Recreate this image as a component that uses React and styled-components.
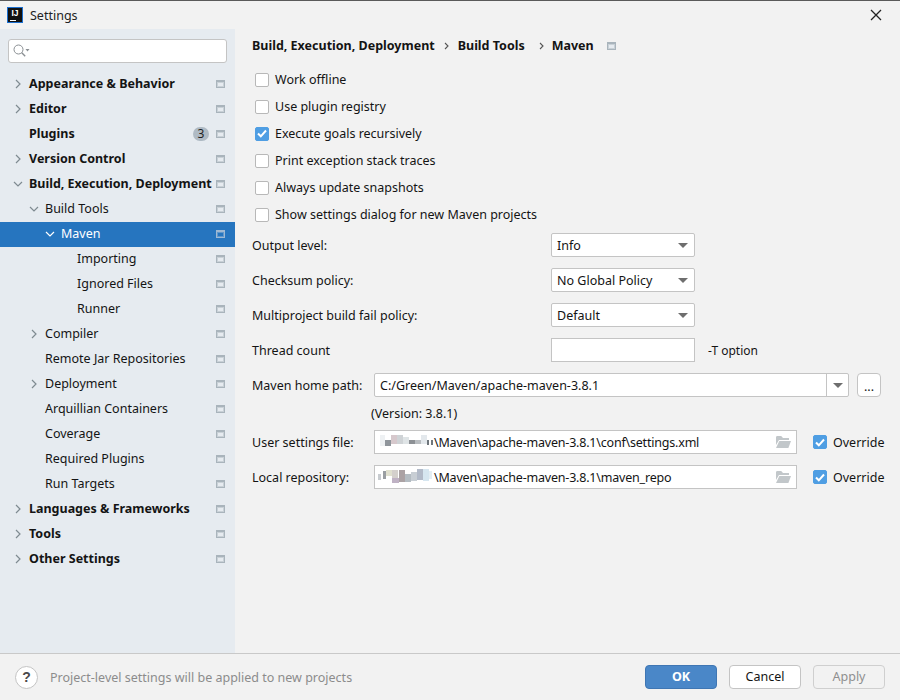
import React from "react";
import styled, { createGlobalStyle } from "styled-components";

const Global = createGlobalStyle`
  html, body { margin: 0; padding: 0; background: #f2f2f2; }
  * { box-sizing: border-box; }
`;

const FONT = `"Noto Sans", "Open Sans", sans-serif`;

const Dialog = styled.div`
  width: 900px; height: 700px; display: flex; flex-direction: column; overflow: hidden;
  font: 12.5px/18px ${FONT}; color: #141414; background: #f2f2f2; border-top: 1px solid #5a5a5a;
`;
const TitleBar = styled.div`
  height: 28px; flex: none; display: flex; align-items: center; padding: 0 18px 0 7px; background: #f2f2f2;
`;
const TitleText = styled.span`margin-left: 7px; padding-top: 2px; font-size: 12.5px; color: #222; flex: 1;`;
const AppIcon = styled.div`
  width: 16px; height: 16px; background: #111; border: 1px solid #1c6fd0; color: #fff; position: relative;
  font: bold 8.5px/10px "Liberation Sans", sans-serif; text-align: center; letter-spacing: 0;
  &::after { content: ""; position: absolute; left: 2px; bottom: 1px; width: 6px; height: 1px; background: #fff; }
`;
const Main = styled.div`flex: 1; display: flex; min-height: 0;`;
const Sidebar = styled.nav`
  width: 235px; flex: none; background: #e6ebf0; padding: 10px 0 0;
`;
const Search = styled.div`
  width: 219px; height: 24px; margin: 0 0 0 8px; background: #fff; border: 1px solid #c4c4c4; border-radius: 3px;
  display: flex; align-items: center; padding-left: 4px;
`;
const Tree = styled.ul`list-style: none; margin: 9px 0 0; padding: 0;`;
const Row = styled.li`
  height: 25px; display: flex; align-items: center; position: relative;
  padding: 0 10px 2px ${p => p.$indent}px;
  background: ${p => (p.$selected ? "#2675bf" : "transparent")};
  color: ${p => (p.$selected ? "#fff" : "#141414")};
  font-weight: ${p => (p.$bold ? 700 : 400)};
`;
const Arrow = styled.span`
  width: 16px; flex: none; margin-left: -16px; display: flex; align-items: center; justify-content: center; height: 100%;
  padding-right: 6px;
`;
const RowLabel = styled.span`flex: 1; white-space: nowrap; overflow: visible;`;
const Badge = styled.span`
  width: 16px; height: 14px; border-radius: 7px; background: #afbac4; color: #1f1f1f;
  font-size: 12px; line-height: 14px; text-align: center; font-weight: 400; margin-right: 7px;
`;
const Content = styled.section`flex: 1; padding: 8px 0 0 17px; min-width: 0;`;
const Crumbs = styled.div`
  height: 18px; display: flex; align-items: center; font-weight: 700; color: #141414;
`;
const CrumbSep = styled.span`
  display: flex; width: ${p => p.$w}px; padding-left: ${p => p.$pl}px; justify-content: center; align-items: center;
`;
const CrumbScope = styled.span`display: flex; margin-left: 13px;`;
const Checks = styled.div`display: flex; flex-direction: column; padding-left: 3px; margin-top: 11px;`;
const CheckRow = styled.label`height: 27px; display: flex; align-items: center; gap: 6px;`;
const Box = styled.span`
  width: 14px; height: 14px; flex: none; border-radius: 2px; display: flex; align-items: center; justify-content: center;
  background: ${p => (p.$on ? "#4f9ee3" : "#fff")};
  border: 1px solid ${p => (p.$on ? "#4f9ee3" : "#b8b8b8")};
`;
const Form = styled.div`display: flex; flex-direction: column; margin-top: 5px;`;
const FormRow = styled.div`
  height: 24px; display: flex; align-items: center; margin-bottom: 11px;
`;
const Label = styled.span`width: ${p => p.$w}px; flex: none; padding-top: 2px;`;
const Value = styled.span`padding-top: 2px;`;
const Select = styled.div`
  width: 144px; height: 24px; background: #fff; border: 1px solid #c4c4c4; border-radius: 2px;
  display: flex; align-items: center; justify-content: space-between; padding: 0 6px 0 5px;
`;
const Caret = styled.span`
  width: 0; height: 0; flex: none; border-left: 5px solid transparent; border-right: 5px solid transparent; border-top: 5px solid #6e6e6e;
`;
const NumberBox = styled.div`width: 144px; height: 24px; background: #fff; border: 1px solid #c4c4c4;`;
const Hint = styled.span`margin-left: 13px; padding-top: 2px; font-size: 12px;`;
const Combo = styled.div`
  width: 475px; height: 24px; background: #fff; border: 1px solid #c4c4c4; border-radius: 2px; display: flex; align-items: center; padding-left: 5px;
`;
const ComboText = styled.span`flex: 1; padding-top: 2px;`;
const ComboButton = styled.span`
  width: 22px; height: 100%; flex: none; border-left: 1px solid #c4c4c4; display: flex; align-items: center; justify-content: center;
`;
const Browse = styled.div`
  width: 24px; height: 24px; margin-left: 8px; background: #fff; border: 1px solid #c4c4c4; border-radius: 4px;
  display: flex; align-items: flex-end; justify-content: center; line-height: 19px;
`;
const Version = styled.div`height: 18px; margin: -3px 0 7px 119px;`;
const PathField = styled.div`
  width: 423px; height: 24px; background: #fff; border: 1px solid #c4c4c4; display: flex; align-items: center; padding: 0 5px 0 1px;
`;
const PathText = styled.span`flex: 1; white-space: nowrap; display: flex; align-items: center;`;
const PathValue = styled.span`padding-top: 2px; letter-spacing: -0.2px;`;
const Override = styled.label`margin-left: 16px; display: flex; align-items: center; gap: 6px;`;
const Footer = styled.footer`
  height: 47px; flex: none; border-top: 1px solid #c9c9c9; display: flex; align-items: center; padding: 0 15px;
`;
const Help = styled.div`
  width: 23px; height: 23px; border-radius: 50%; background: #fff; border: 1px solid #c4c4c4; color: #4a4a4a;
  display: flex; align-items: center; justify-content: center; font: bold 14px/1 "Liberation Sans", sans-serif;
`;
const Note = styled.span`margin-left: 12px; padding-top: 2px; flex: 1; color: #8c8c8c;`;
const Btn = styled.button`
  width: 72px; height: 24px; margin-left: 12px; padding: 0; border-radius: 4px; font: 12.5px/18px ${FONT};
  background: ${p => (p.$primary ? "#4a87c8" : p.$disabled ? "#f2f2f2" : "#fff")};
  color: ${p => (p.$primary ? "#fff" : p.$disabled ? "#8f8f8f" : "#141414")};
  border: 1px solid ${p => (p.$primary ? "#3f76b3" : p.$disabled ? "#cfcfcf" : "#c4c4c4")};
  font-weight: ${p => (p.$primary ? 700 : 400)};
`;
const PatchSvg = styled.svg`flex: none; display: block;`;

const Chevron = ({ open, color = "#7f8b91" }) => (
  <svg width="10" height="10" viewBox="0 0 10 10" fill="none" stroke={color} strokeWidth="1.2">
    {open ? <path d="M1 3l4 4 4-4" /> : <path d="M3 1l4 4-4 4" />}
  </svg>
);
const CrumbChevron = () => (
  <svg width="5" height="8" viewBox="0 0 5 8" fill="none" stroke="#555" strokeWidth="1.1">
    <path d="M1 1l3 3-3 3" />
  </svg>
);
const Scope = ({ selected }) => (
  <svg width="9" height="8" viewBox="0 0 9 8">
    <rect x="0" y="0" width="9" height="8" fill={selected ? "#9fb9d3" : "#a9b4bc"} />
    <rect x="1" y="2" width="7" height="5" fill={selected ? "#5f97cc" : "#c9d1d7"} />
    <rect x="2" y="3" width="5" height="3" fill={selected ? "#2675bf" : "#e6ebf0"} />
  </svg>
);
const Check = () => (
  <svg width="10" height="9" viewBox="0 0 10 9" fill="none" stroke="#fff" strokeWidth="2">
    <path d="M1 4.5l2.8 2.8L9 1.5" />
  </svg>
);
const Folder = () => (
  <svg width="15" height="12" viewBox="0 0 15 12">
    <path d="M0 1.5C0 .7.5 0 1.2 0h4L7 2h6v2H3L0 9z" fill="#c2c7ca" />
    <path d="M3.3 5H15l-2.6 7H0z" fill="#c2c7ca" />
  </svg>
);
const SearchIcon = () => (
  <svg width="17" height="14" viewBox="0 0 17 14" fill="none">
    <circle cx="5.5" cy="5.5" r="4.5" stroke="#8a8f93" />
    <path d="M8.8 8.8l3.4 3.4" stroke="#8a8f93" strokeWidth="1.4" />
    <path d="M12.5 5h4l-2 2.4z" fill="#8a8f93" />
  </svg>
);
const Close = () => (
  <svg width="12" height="12" viewBox="0 0 12 12" stroke="#222" strokeWidth="1.3">
    <path d="M1 1l10 10M11 1L1 11" />
  </svg>
);
const Patch = ({ cells, width }) => (
  <PatchSvg width={width} height="22" viewBox={`0 0 ${width} 22`}>
    {cells.map(([x, y, w, h, c], i) => <rect key={i} x={x} y={y} width={w} height={h} fill={c} />)}
  </PatchSvg>
);

const tree = [
  { t: "Appearance & Behavior", i: 29, b: 1, a: "r" },
  { t: "Editor", i: 29, b: 1, a: "r" },
  { t: "Plugins", i: 29, b: 1, badge: 3 },
  { t: "Version Control", i: 29, b: 1, a: "r" },
  { t: "Build, Execution, Deployment", i: 29, b: 1, a: "d" },
  { t: "Build Tools", i: 45, a: "d" },
  { t: "Maven", i: 61, a: "d", s: 1 },
  { t: "Importing", i: 77 },
  { t: "Ignored Files", i: 77 },
  { t: "Runner", i: 77 },
  { t: "Compiler", i: 45, a: "r" },
  { t: "Remote Jar Repositories", i: 45 },
  { t: "Deployment", i: 45, a: "r" },
  { t: "Arquillian Containers", i: 45 },
  { t: "Coverage", i: 45 },
  { t: "Required Plugins", i: 45 },
  { t: "Run Targets", i: 45 },
  { t: "Languages & Frameworks", i: 29, b: 1, a: "r" },
  { t: "Tools", i: 29, b: 1, a: "r" },
  { t: "Other Settings", i: 29, b: 1, a: "r" },
];

const checks = [
  ["Work offline"],
  ["Use plugin registry"],
  ["Execute goals recursively", true],
  ["Print exception stack traces"],
  ["Always update snapshots"],
  ["Show settings dialog for new Maven projects"],
];

const patchA = [
  [4, 4, 5, 11, "#eef1f3"], [9, 9, 6, 6, "#8f959b"], [15, 4, 6, 9, "#d6c8cc"], [21, 4, 6, 9, "#cfd3d6"],
  [27, 6, 6, 7, "#dfe4e6"], [33, 9, 6, 4, "#8c9095"], [39, 9, 6, 4, "#b8bcc0"], [45, 4, 6, 9, "#e3e8ec"], [51, 9, 2, 5, "#6f767c"], [55, 9, 2, 5, "#6f767c"],
];
const patchB = [
  [2, 8, 3, 6, "#c8ccd0"], [7, 5, 3, 8, "#9a9ea2"], [10, 4, 7, 6, "#e0e0cf"], [16, 4, 6, 8, "#d4d0cc"],
  [16, 12, 7, 5, "#bfb2c4"], [23, 4, 6, 12, "#aba2a4"], [29, 8, 6, 8, "#b4bcc2"], [35, 6, 6, 9, "#c8ced4"],
  [41, 3, 6, 11, "#b2bac8"], [47, 3, 6, 12, "#d6e6f0"], [53, 5, 3, 8, "#e4eef4"],
];

export default function App() {
  return (
    <>
      <Global />
      <Dialog>
        <TitleBar>
          <AppIcon>IJ</AppIcon>
          <TitleText>Settings</TitleText>
          <Close />
        </TitleBar>
        <Main>
          <Sidebar>
            <Search><SearchIcon /></Search>
            <Tree>
              {tree.map(n => (
                <Row key={n.t} $indent={n.i} $bold={n.b} $selected={n.s}>
                  {n.a && <Arrow><Chevron open={n.a === "d"} color={n.s ? "#fff" : "#7f8b91"} /></Arrow>}
                  <RowLabel>{n.t}</RowLabel>
                  {n.badge && <Badge>{n.badge}</Badge>}
                  <Scope selected={n.s} />
                </Row>
              ))}
            </Tree>
          </Sidebar>
          <Content>
            <Crumbs>
              Build, Execution, Deployment
              <CrumbSep $w={23} $pl={0}><CrumbChevron /></CrumbSep>
              Build Tools
              <CrumbSep $w={27} $pl={6}><CrumbChevron /></CrumbSep>
              Maven
              <CrumbScope><Scope /></CrumbScope>
            </Crumbs>
            <Checks>
              {checks.map(([t, on]) => (
                <CheckRow key={t}><Box $on={on}>{on && <Check />}</Box>{t}</CheckRow>
              ))}
            </Checks>
            <Form>
              <FormRow><Label $w={299}>Output level:</Label><Select><Value>Info</Value><Caret /></Select></FormRow>
              <FormRow><Label $w={299}>Checksum policy:</Label><Select><Value>No Global Policy</Value><Caret /></Select></FormRow>
              <FormRow><Label $w={299}>Multiproject build fail policy:</Label><Select><Value>Default</Value><Caret /></Select></FormRow>
              <FormRow><Label $w={299}>Thread count</Label><NumberBox /><Hint>-T option</Hint></FormRow>
              <FormRow>
                <Label $w={122}>Maven home path:</Label>
                <Combo><ComboText>C:/Green/Maven/apache-maven-3.8.1</ComboText><ComboButton><Caret /></ComboButton></Combo>
                <Browse>...</Browse>
              </FormRow>
              <Version>(Version: 3.8.1)</Version>
              <FormRow>
                <Label $w={122}>User settings file:</Label>
                <PathField>
                  <PathText><Patch cells={patchA} width={58} /><PathValue>\Maven\apache-maven-3.8.1\conf\settings.xml</PathValue></PathText>
                  <Folder />
                </PathField>
                <Override><Box $on><Check /></Box><Value>Override</Value></Override>
              </FormRow>
              <FormRow>
                <Label $w={122}>Local repository:</Label>
                <PathField>
                  <PathText><Patch cells={patchB} width={58} /><PathValue>\Maven\apache-maven-3.8.1\maven_repo</PathValue></PathText>
                  <Folder />
                </PathField>
                <Override><Box $on><Check /></Box><Value>Override</Value></Override>
              </FormRow>
            </Form>
          </Content>
        </Main>
        <Footer>
          <Help>?</Help>
          <Note>Project-level settings will be applied to new projects</Note>
          <Btn $primary>OK</Btn>
          <Btn>Cancel</Btn>
          <Btn $disabled>Apply</Btn>
        </Footer>
      </Dialog>
    </>
  );
}
